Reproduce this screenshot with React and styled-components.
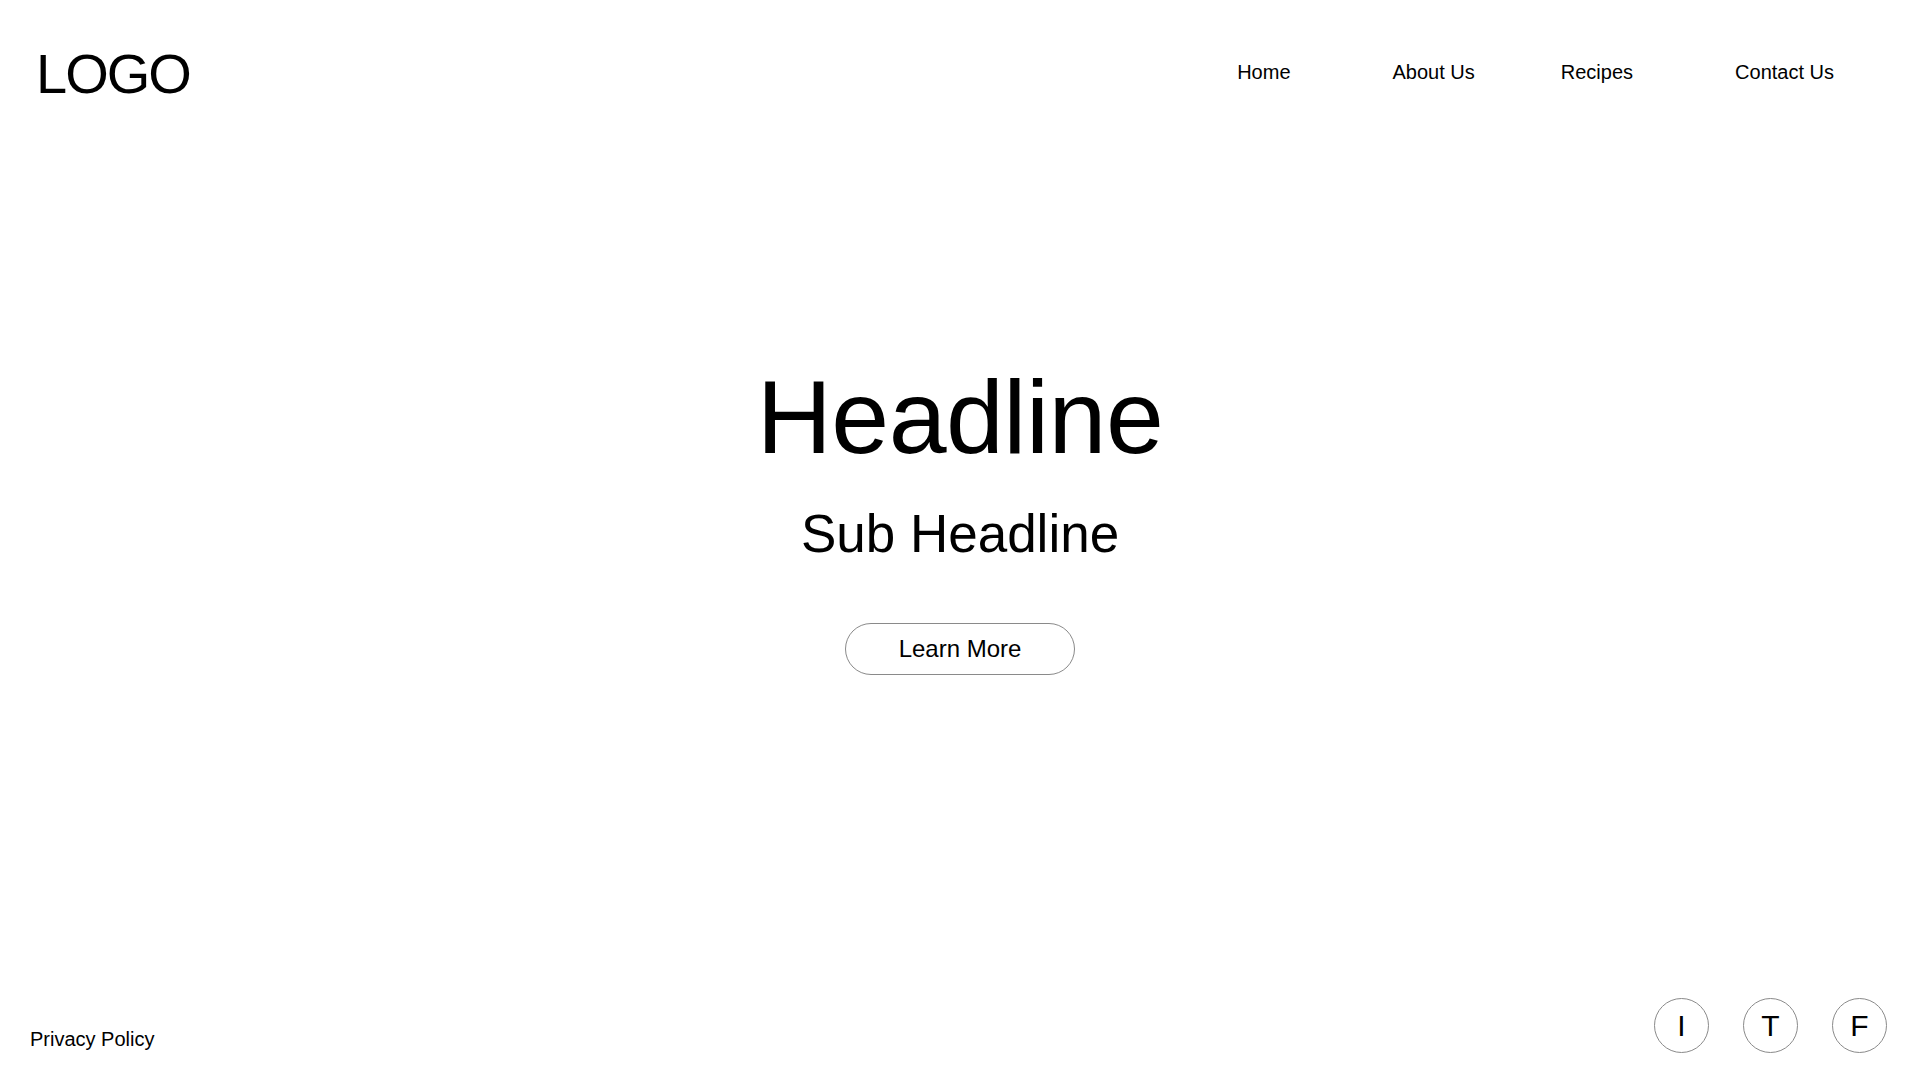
import styled, { createGlobalStyle } from 'styled-components';

const GlobalStyle = createGlobalStyle`
  * {
    box-sizing: border-box;
  }
  body {
    margin: 0;
    background: #fff;
    color: #000;
    font-family: "Liberation Sans", Arial, Helvetica, sans-serif;
  }
`;

const Page = styled.div`
  display: flex;
  flex-direction: column;
  width: 100%;
  min-height: 100vh;
`;
const Header = styled.header`
  display: flex;
  justify-content: space-between;
  align-items: center;
  height: 144px;
  padding: 0 86px 0 36px;
`;
const Logo = styled.div`
  padding-top: 3px;
  font-size: 56px;
  letter-spacing: -2px;
  line-height: 1;
`;
const Nav = styled.nav`
  display: flex;
  align-items: center;
`;
const NavLink = styled.a`
  margin-right: ${(props) => props.space || 0}px;
  font-size: 20px;
  color: #000;
  text-decoration: none;
  cursor: pointer;
`;
const Hero = styled.main`
  display: flex;
  flex-direction: column;
  align-items: center;
  padding-top: 221px;
`;
const Headline = styled.h1`
  margin: 0;
  font-size: 104px;
  font-weight: normal;
  line-height: 1;
  letter-spacing: -0.5px;
`;
const SubHeadline = styled.h2`
  margin: 38px 0 0;
  font-size: 53px;
  font-weight: normal;
  line-height: 1;
`;
const Button = styled.button`
  width: 230px;
  height: 52px;
  margin-top: 63px;
  border: 1px solid #8a8a8a;
  border-radius: 26px;
  background: #fff;
  font-family: inherit;
  font-size: 24px;
  color: #000;
  cursor: pointer;
`;
const Footer = styled.footer`
  display: flex;
  justify-content: space-between;
  align-items: flex-end;
  margin-top: auto;
  padding: 0 33px 27px 30px;
`;
const Policy = styled.a`
  margin-bottom: 2px;
  font-size: 20px;
  color: #000;
  text-decoration: none;
`;
const Socials = styled.div`
  display: flex;
  gap: 34px;
`;
const Social = styled.a`
  display: flex;
  justify-content: center;
  align-items: center;
  width: 55px;
  height: 55px;
  border: 1px solid #8a8a8a;
  border-radius: 50%;
  font-size: 30px;
  color: #000;
  text-decoration: none;
`;

function App() {
  const links = [
    { label: 'Home', space: 102 },
    { label: 'About Us', space: 86 },
    { label: 'Recipes', space: 102 },
    { label: 'Contact Us', space: 0 },
  ];

  return (
    <Page>
      <GlobalStyle />
      <Header>
        <Logo>LOGO</Logo>
        <Nav>
          {links.map((item) => (
            <NavLink key={item.label} space={item.space}>{item.label}</NavLink>
          ))}
        </Nav>
      </Header>
      <Hero>
        <Headline>Headline</Headline>
        <SubHeadline>Sub Headline</SubHeadline>
        <Button>Learn More</Button>
      </Hero>
      <Footer>
        <Policy>Privacy Policy</Policy>
        <Socials>
          <Social>I</Social>
          <Social>T</Social>
          <Social>F</Social>
        </Socials>
      </Footer>
    </Page>
  );
}

export default App;
